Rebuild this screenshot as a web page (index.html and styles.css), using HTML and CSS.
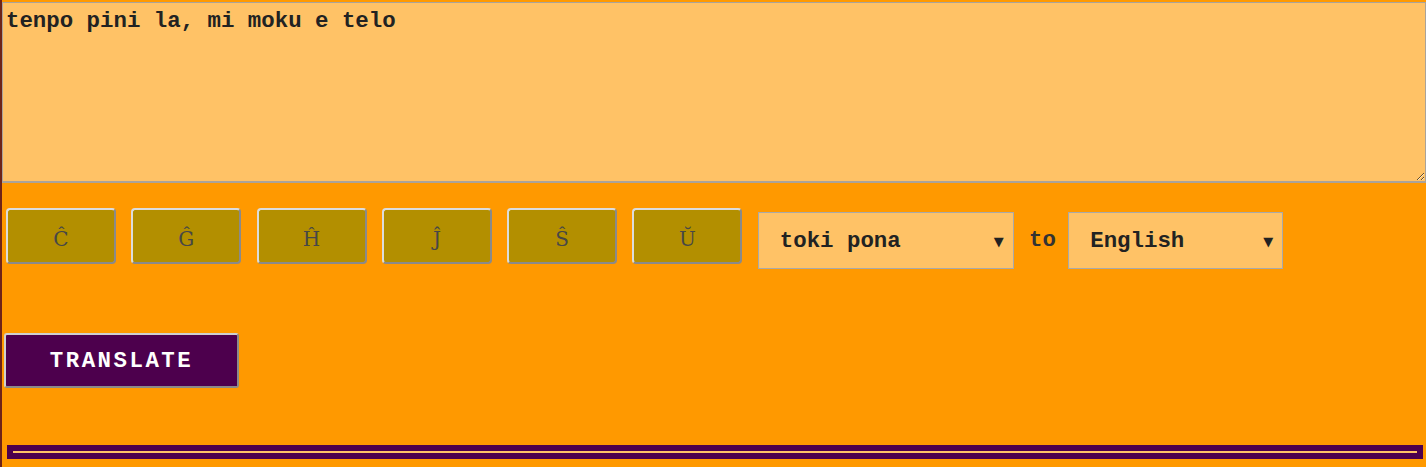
FILE: index.html
```html
<!DOCTYPE html>
<html>
<head>
<meta charset="utf-8">
<link rel="stylesheet" href="styles.css">
</head>
<body>
<div class="page">
  <textarea class="source">tenpo pini la, mi moku e telo</textarea>
  <div class="controls">
    <button class="key">Ĉ</button>
    <button class="key">Ĝ</button>
    <button class="key">Ĥ</button>
    <button class="key">Ĵ</button>
    <button class="key">Ŝ</button>
    <button class="key">Ŭ</button>
    <span class="select-wrap wide"><select class="lang"><option>toki pona</option></select></span>
    <span class="to">to</span>
    <span class="select-wrap narrow"><select class="lang"><option>English</option></select></span>
  </div>
  <button class="translate">TRANSLATE</button>
  <div class="output"></div>
</div>
</body>
</html>
```
FILE: styles.css
```css
html, body {
  margin: 0;
  padding: 0;
  background: #ff9900;
}
body {
  height: 467px;
  overflow: hidden;
}
.page {
  border-left: 2px solid #6e2418;
  min-height: 467px;
  padding-top: 2px;
  box-sizing: border-box;
}
.source, .lang, .to, .translate {
  font-family: "Liberation Mono", monospace;
}
.source {
  display: block;
  box-sizing: border-box;
  width: 100%;
  height: 181px;
  margin: 0;
  padding: 5px 3px 2px 3px;
  background: #ffc266;
  border: 1px solid #aaa39a;
  border-bottom-width: 2px;
  font-weight: bold;
  font-size: 22.4px;
  color: #222;
  resize: both;
  outline: none;
}
.controls {
  display: flex;
  align-items: flex-start;
  gap: 15.3px;
  margin-top: 25px;
  padding-left: 4px;
}
.key {
  box-sizing: border-box;
  width: 110px;
  height: 56px;
  margin: 0;
  padding: 6px 0 0 0;
  background: #b38f00;
  border: 2px solid;
  border-color: #dcdcdc #8a8a8a #8a8a8a #dcdcdc;
  border-radius: 4px;
  font-family: "DejaVu Serif", serif;
  font-size: 20px;
  color: #474747;
}
.select-wrap {
  position: relative;
  display: block;
  margin-top: 4px;
}
.select-wrap.wide { width: 256px; }
.select-wrap.narrow { width: 215px; }
.select-wrap::after {
  content: "▼";
  position: absolute;
  right: 10px;
  top: 50%;
  transform: translateY(-50%);
  font-family: "DejaVu Sans", sans-serif;
  font-size: 13px;
  color: #222;
  pointer-events: none;
}
.lang {
  -webkit-appearance: none;
  appearance: none;
  display: block;
  box-sizing: border-box;
  width: 100%;
  height: 57px;
  margin: 0;
  padding: 0 0 0 21px;
  background: #ffc266;
  border: 1px solid #a9a9a9;
  border-radius: 0;
  font-weight: bold;
  font-size: 22.4px;
  color: #222;
}
.to {
  margin-top: 19px;
  margin-right: -3px;
  font-weight: bold;
  font-size: 22.4px;
  color: #333;
}
.translate {
  display: block;
  box-sizing: border-box;
  width: 235px;
  height: 55px;
  margin: 64px 0 0 2px;
  padding: 0;
  background: #4d004d;
  border: 2px solid;
  border-color: #d0d0d0 #8a8a8a #8a8a8a #d0d0d0;
  border-radius: 3px;
  font-weight: bold;
  font-size: 22.4px;
  letter-spacing: 2.5px;
  color: #fff;
}
.output {
  height: 2px;
  margin: 57px 3px 0 5px;
  background: #ffc266;
  border: 6px solid #4d004d;
}
```
